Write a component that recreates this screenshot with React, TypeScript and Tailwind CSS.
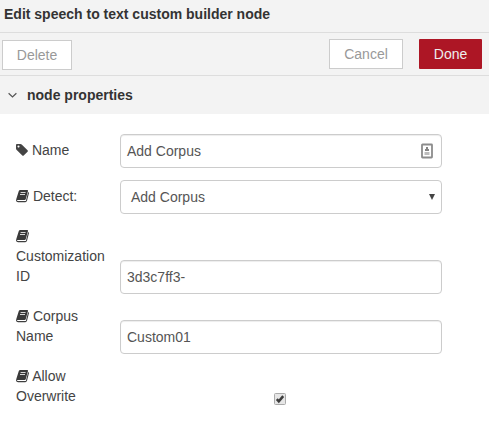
import React from "react";

const text = "font-['Liberation_Sans',Arial,sans-serif] text-[14px] leading-5";
const field =
  "flex h-[34px] w-[322px] shrink-0 items-center rounded-[4px] border border-[#ccc] bg-white px-1.5 text-[#555]";

function BookIcon() {
  return (
    <svg className="inline-block h-[14px] w-[13px] align-[-2px]" viewBox="0 0 13 14">
      <path d="M4.2 1h7q1.1 0 .8 1L9.8 10q-.3 1-1.2 1H1.1Q0 11 .3 10L2.8 2q.4-1 1.4-1z" fill="#3a3a3a" />
      <path d="M.5 10.4q-.1 2.2 1.7 2.2h7.1q.9 0 1.2-.9l2.1-8.3" fill="none" stroke="#3f3f3f" strokeWidth="1.1" />
      <path d="M4.6 3.5h5M4 5.5h5" stroke="#fff" strokeWidth=".8" />
    </svg>
  );
}

function TagIcon() {
  return (
    <svg className="inline-block h-[14px] w-[12px] align-[-2px]" viewBox="0 0 1536 1792" fill="currentColor">
      <path d="M448 448q0-53-37.5-90.5t-90.5-37.5-90.5 37.5-37.5 90.5 37.5 90.5 90.5 37.5 90.5-37.5 37.5-90.5zm1067 576q0 53-37 90l-491 492q-39 37-91 37-53 0-90-37l-715-716q-38-37-64.5-101t-26.5-117v-416q0-52 38-90t90-38h416q53 0 117 26.5t102 64.5l715 714q37 39 37 91z" />
    </svg>
  );
}

function ContactIcon() {
  return (
    <svg className="h-4 w-3" viewBox="0 0 12 16">
      <rect x="1" y="1.5" width="10" height="13" rx="0.5" fill="#fff" stroke="#8c8c8c" strokeWidth="1.8" />
      <path d="M5 4h2v2h1v2H4V6h1z" fill="#858585" />
      <path d="M3.5 9h5v3h-5z" fill="#bdbdbd" />
    </svg>
  );
}

function Row({ label, icon, className, children }: {
  label: string;
  icon: React.ReactNode;
  className: string;
  children: React.ReactNode;
}) {
  return (
    <div className={"flex " + className}>
      <div className="w-[104px] shrink-0 pr-[14px] text-[#444]">
        {icon} {label}
      </div>
      {children}
    </div>
  );
}

export default function App() {
  return (
    <div className={"h-[425px] w-[489px] overflow-hidden bg-white " + text}>
      <header className="h-[33px] border-b border-[#ddd] bg-[#f3f3f3] pt-1 pl-1 font-bold text-[#333]">
        Edit speech to text custom builder node
      </header>
      <div className="flex h-[43px] items-start border-b border-[#ddd] bg-[#f3f3f3] pt-1.5 pr-[7px] pl-0.5">
        <button className="mt-px h-[30px] w-[70px] border border-[#ccc] bg-white text-[#999]">Delete</button>
        <button className="ml-auto h-[30px] w-[74px] border border-[#ccc] bg-white text-[#999]">Cancel</button>
        <button className="ml-4 h-[30px] w-[63px] rounded-[1px] bg-[#ad1625] text-[#eee]">Done</button>
      </div>
      <div className="flex h-[38px] items-center bg-[#f3f3f3] pl-2 font-bold text-[#333]">
        <svg className="mr-[10px] h-2 w-[9px]" viewBox="0 0 9 8" fill="none" stroke="#555" strokeWidth="1.2">
          <path d="M.6 2.2 4.5 6 8.4 2.2" />
        </svg>
        node properties
      </div>
      <main className="px-4 pt-5">
        <Row label="Name" icon={<TagIcon />} className="h-[46px] [&>div:first-child]:pt-1.5">
          <div className={field + " justify-between pr-2 shadow-[inset_0_1px_1px_rgba(0,0,0,0.075)]"}>
            Add Corpus <ContactIcon />
          </div>
        </Row>
        <Row label="Detect:" icon={<BookIcon />} className="h-[46px] [&>div:first-child]:pt-1.5">
          <div className={field + " justify-between pr-1.5 pl-2.5"}>
            Add Corpus
            <svg className="h-[6px] w-[6px]" viewBox="0 0 6 6" fill="#444">
              <path d="M0 0h6L3 6z" />
            </svg>
          </div>
        </Row>
        <Row label="Customization ID" icon={<BookIcon />} className="h-[80px] items-start">
          <div className={field + " mt-[34px] shadow-[inset_0_1px_1px_rgba(0,0,0,0.075)]"}>3d3c7ff3-</div>
        </Row>
        <Row label="Corpus Name" icon={<BookIcon />} className="h-[60px] items-start">
          <div className={field + " mt-[14px] shadow-[inset_0_1px_1px_rgba(0,0,0,0.075)]"}>Custom01</div>
        </Row>
        <Row label="Allow Overwrite" icon={<BookIcon />} className="h-[60px] items-start">
          <div className="flex w-[320px] justify-center pt-[27px]">
            <svg className="h-3 w-3" viewBox="0 0 12 12">
              <rect x=".5" y=".5" width="11" height="11" rx="1" fill="#e6e6e6" stroke="#aaa" />
              <path d="M2.8 6.2 4.8 8.4 9.2 3.1" fill="none" stroke="#3c3c3c" strokeWidth="2.5" />
            </svg>
          </div>
        </Row>
      </main>
    </div>
  );
}
